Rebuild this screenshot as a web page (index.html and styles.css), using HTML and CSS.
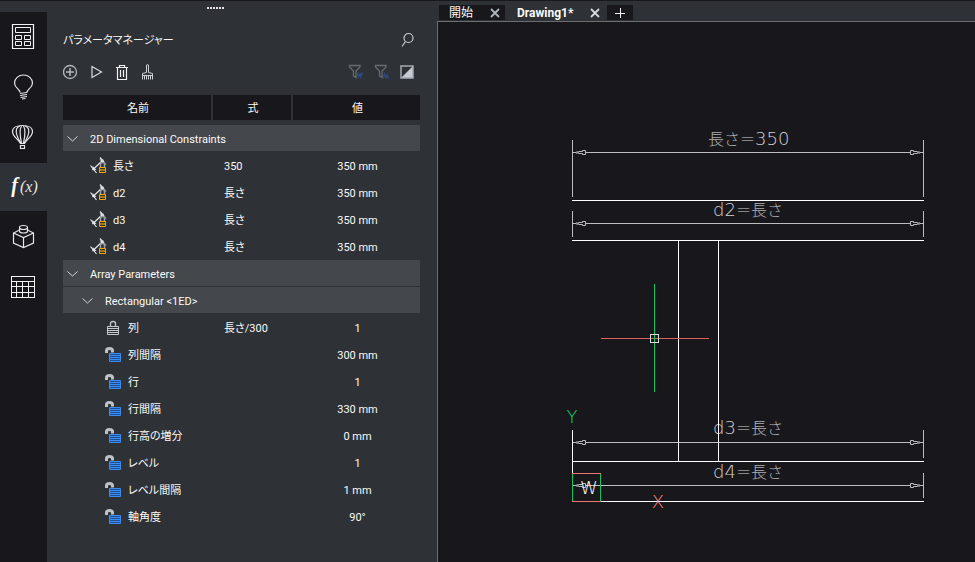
FILE: index.html
```html
<!DOCTYPE html>
<html lang="ja">
<head>
<meta charset="utf-8">
<meta name="viewport" content="width=device-width, initial-scale=1">
<title>Drawing1</title>
<link rel="stylesheet" href="styles.css">
</head>
<body>
<svg class="defs" aria-hidden="true">
  <symbol id="chevron" viewBox="0 0 11 17">
    <path d="M0.5 6.5L5.5 11L10.5 6.5" fill="none" stroke="#d4d6d9"/>
  </symbol>
  <symbol id="dim-lock" viewBox="0 0 17 17">
    <path d="M2.500 13L13 3M10 0.500L16 7.500M0.500 8.500L6.500 16" fill="none" stroke="#e4e6e8" stroke-width="1.200"/>
    <path d="M9.500 2.500H13.500V6.500ZM2.500 9V13H6.500Z" fill="#e4e6e8"/>
    <path d="M8.500 16.500V9.500H10V6L11.500 5H14L15.500 6V9.500H16.500V16.500Z" fill="#2e3135"/>
    <path d="M10.500 10V7.500Q10.500 5.500 12.500 5.500T14.500 7.500V10" fill="none" stroke="#9da3a9" stroke-width="1.500"/>
    <path d="M9.500 10.500H15.500V15.500H9.500Z" fill="#3a3020" stroke="#ffa60d"/>
    <path d="M10 13H15" stroke="#ffc21a"/>
  </symbol>
  <symbol id="lock" viewBox="0 0 17 17">
    <path d="M5.500 7V4.500Q5.500 2.500 8 2.500T10.500 4.500V7" fill="none" stroke="#c4c9ce" stroke-width="1.300"/>
    <path d="M2.500 7.500H13.500V15.500H2.500ZM3 9.500H13M3 11.500H13M3 13.500H13" fill="none" stroke="#c4c9ce"/>
  </symbol>
  <symbol id="unlock" viewBox="0 0 17 17">
    <path d="M1.500 7V4.500Q1.500 2.500 4.500 2.500T7.500 4.500V6.500" fill="none" stroke="#bcc2c8" stroke-width="3"/>
    <path d="M4.500 7.500H15.500V15.500H4.500Z" fill="#1f4f93" stroke="#3b8df2"/>
    <path d="M5 9.500H15M5 11.500H15M5 13.500H15" stroke="#3b8df2"/>
  </symbol>
  <symbol id="close" viewBox="0 0 10 10">
    <path d="M1 1L9 9M9 1L1 9" fill="none" stroke="currentColor" stroke-width="1.800"/>
  </symbol>
  <symbol id="arrow" viewBox="0 0 13 5" overflow="visible">
    <path d="M0 2.500H3M3 2H6V1.500H9.500V0.500H12.500V4.500H9.500V3.500H6V3H3" fill="none" stroke="#bdbdc0"/>
  </symbol>
</svg>

<div class="app">
  <div class="dock">
    <div class="grip" aria-hidden="true"><i></i><i></i><i></i><i></i><i></i><i></i></div>
    <div class="dock-body">
      <nav class="rail" aria-label="パネル">
        <button class="rail-item" type="button" aria-label="プロパティ">
          <svg width="25" height="26" fill="none" stroke="#f2f2f3"><path d="M1.500 0.500H22.500V24.500H1.500Z" stroke-width="1.200"/><path d="M4.500 3.500H19.500V8.500H4.500ZM4.500 11.500H10.500V15.500H4.500ZM13.500 11.500H19.500V15.500H13.500ZM4.500 17.500H10.500V21.500H4.500ZM13.500 17.500H19.500V21.500H13.500Z"/></svg>
        </button>
        <button class="rail-item" type="button" aria-label="ヒント">
          <svg width="25" height="26" fill="none" stroke="#e6e6e8" stroke-width="1.200"><path d="M9 18.500C9 15 3.500 14 3.500 9A9 8 0 0 1 21.500 9C21.500 14 16 15 16 18.500"/><path d="M9 19.500L16 18.500M9 21.500L16 20.500M9.500 23.500L16 22.500M11 25L14.500 24.500"/></svg>
        </button>
        <button class="rail-item" type="button" aria-label="レンダリング">
          <svg width="25" height="26" fill="none" stroke="#e6e6e8" stroke-width="1.200"><path d="M9.500 19.500C7 15 1.500 12.500 1.500 7.500C1.500 3.500 6 1.500 11.500 1.500S21.500 3.500 21.500 7.500C21.500 12.500 16 15 13.500 19.500Z"/><path d="M9.500 19C6 12 4.500 9 5.500 5Q6.500 2.500 9 2M13.500 19C17 12 18.500 9 17.500 5Q16.500 2.500 14 2M10.500 19C8.500 10 8.500 5 10.500 2M12.500 19C14.500 10 14.500 5 12.500 2"/><path d="M9.500 21.500H13.500V24.500H9.500Z"/></svg>
        </button>
        <button class="rail-item rail-item-active" type="button" aria-label="パラメータ"><span class="fx"><b>f</b>(x)</span></button>
        <button class="rail-item" type="button" aria-label="コンポーネント">
          <svg width="25" height="26" fill="none" stroke="#e6e6e8" stroke-width="1.200"><path d="M8.500 6L2.500 9V19L12.500 23.500L22.500 19V9L16.500 6M2.500 9L12.500 13.500L22.500 9M12.500 13.500V23.500"/><path d="M8.500 4V7Q8.500 9 12.500 9T16.500 7V4"/><ellipse cx="12.500" cy="3.500" rx="4" ry="2"/></svg>
        </button>
        <button class="rail-item" type="button" aria-label="表">
          <svg width="25" height="26" fill="none" stroke="#f2f2f3" shape-rendering="crispEdges"><path d="M0.500 2.500H23.500V23.500H0.500ZM0.500 7.500H23.500M0.500 12.500H23.500M0.500 18.500H23.500M5.500 7.500V23.500M11.500 7.500V23.500M17.500 7.500V23.500"/></svg>
        </button>
      </nav>

      <section class="panel" aria-labelledby="panel-title">
        <header class="panel-head">
          <h1 class="panel-title" id="panel-title">パラメータマネージャー</h1>
          <button class="tool" type="button" aria-label="検索">
            <svg width="16" height="16" fill="none" stroke="#c9ccd0" stroke-width="1.200"><circle cx="9.500" cy="6" r="4.500"/><path d="M6.500 9.500L3 14.500"/></svg>
          </button>
        </header>
        <div class="toolbar">
          <div class="tools">
            <button class="tool" type="button" aria-label="追加">
              <svg width="16" height="16" fill="none" stroke="#b4b9be" stroke-width="1.300"><circle cx="7" cy="8" r="6.500"/><path d="M7 4V12M3 8H11" stroke-width="1.500"/></svg>
            </button>
            <button class="tool" type="button" aria-label="アニメーション">
              <svg width="16" height="16" fill="none" stroke="#d9dbde" stroke-width="1.200"><path d="M3 2.500L12.500 8L3 13.500Z"/></svg>
            </button>
            <button class="tool" type="button" aria-label="削除">
              <svg width="16" height="16" fill="none" stroke="#f0f1f2" stroke-width="1.200"><path d="M1 3.500H13M4.500 3V1.500H9.500V3M2.500 4V15.500H11.500V4M5.500 6V13M8.500 6V13"/></svg>
            </button>
            <button class="tool" type="button" aria-label="クリーンアップ">
              <svg width="16" height="16" fill="none" stroke="#cdd0d4"><path d="M5.500 8.500V2Q5.500 0.500 6.500 0.500T7.500 2V8.500L11.500 9.500V15.500M5.500 8.500L1.500 9.500V15.500M1.500 11.500H11.500M3.500 12V15.500M5.500 12V15.500M7.500 12V15.500M9.500 12V15.500"/></svg>
            </button>
          </div>
          <div class="tools tools-end">
            <button class="tool" type="button" aria-label="フィルターを展開">
              <svg width="16" height="16" fill="none" stroke="#686c71" stroke-width="1.300"><path d="M2.500 1.500H13V3L9 7V13.500L6.500 12V7L2.500 3Z"/><path d="M10 8.500L11.500 13L13 9.500L14 13L15.500 8.500" stroke="#2d4a7c" stroke-width="1.500"/></svg>
            </button>
            <button class="tool" type="button" aria-label="フィルターを折りたたむ">
              <svg width="16" height="16" fill="none" stroke="#686c71" stroke-width="1.300"><path d="M2.500 1.500H13V3L9 7V13.500L6.500 12V7L2.500 3Z"/><path d="M10 14.500L11.500 10L13 13.500L14 11L15.500 14.500" stroke="#2d4a7c" stroke-width="1.500"/></svg>
            </button>
            <button class="tool" type="button" aria-label="反転">
              <svg width="16" height="16"><path d="M14 2V14H2Z" fill="#c6ccd3"/><path d="M2 2H14V14H2Z" fill="none" stroke="#a5aab0" stroke-width="1.500"/></svg>
            </button>
          </div>
        </div>

        <table class="params">
          <colgroup><col class="col-name"><col class="col-formula"><col></colgroup>
          <thead>
            <tr><th scope="col">名前</th><th scope="col">式</th><th scope="col">値</th></tr>
          </thead>
          <tbody>
            <tr class="group"><th colspan="3" scope="rowgroup"><button class="group-toggle" type="button" aria-expanded="true"><svg class="chevron"><use href="#chevron"/></svg>2D Dimensional Constraints</button></th></tr>
            <tr><td><span class="name"><svg class="icon"><use href="#dim-lock"/></svg>長さ</span></td><td>350</td><td>350 mm</td></tr>
            <tr><td><span class="name"><svg class="icon"><use href="#dim-lock"/></svg>d2</span></td><td>長さ</td><td>350 mm</td></tr>
            <tr><td><span class="name"><svg class="icon"><use href="#dim-lock"/></svg>d3</span></td><td>長さ</td><td>350 mm</td></tr>
            <tr><td><span class="name"><svg class="icon"><use href="#dim-lock"/></svg>d4</span></td><td>長さ</td><td>350 mm</td></tr>
          </tbody>
          <tbody class="nested">
            <tr class="group"><th colspan="3" scope="rowgroup"><button class="group-toggle" type="button" aria-expanded="true"><svg class="chevron"><use href="#chevron"/></svg>Array Parameters</button></th></tr>
            <tr class="group subgroup"><th colspan="3" scope="rowgroup"><button class="group-toggle" type="button" aria-expanded="true"><svg class="chevron"><use href="#chevron"/></svg>Rectangular &lt;1ED&gt;</button></th></tr>
            <tr><td><span class="name"><svg class="icon"><use href="#lock"/></svg>列</span></td><td>長さ/300</td><td>1</td></tr>
            <tr><td><span class="name"><svg class="icon"><use href="#unlock"/></svg>列間隔</span></td><td></td><td>300 mm</td></tr>
            <tr><td><span class="name"><svg class="icon"><use href="#unlock"/></svg>行</span></td><td></td><td>1</td></tr>
            <tr><td><span class="name"><svg class="icon"><use href="#unlock"/></svg>行間隔</span></td><td></td><td>330 mm</td></tr>
            <tr><td><span class="name"><svg class="icon"><use href="#unlock"/></svg>行高の増分</span></td><td></td><td>0 mm</td></tr>
            <tr><td><span class="name"><svg class="icon"><use href="#unlock"/></svg>レベル</span></td><td></td><td>1</td></tr>
            <tr><td><span class="name"><svg class="icon"><use href="#unlock"/></svg>レベル間隔</span></td><td></td><td>1 mm</td></tr>
            <tr><td><span class="name"><svg class="icon"><use href="#unlock"/></svg>軸角度</span></td><td></td><td>90°</td></tr>
          </tbody>
        </table>
      </section>
    </div>
  </div>

  <main class="document">
    <div class="tabs">
      <div class="tab"><a class="tab-label" href="#start">開始</a><button class="tab-close" type="button" aria-label="開始を閉じる"><svg width="10" height="10"><use href="#close"/></svg></button></div>
      <div class="tab tab-active"><a class="tab-label" href="#drawing">Drawing1*</a><button class="tab-close" type="button" aria-label="Drawing1を閉じる"><svg width="10" height="10"><use href="#close"/></svg></button></div>
      <button class="tab-new" type="button" aria-label="新しい図面"><svg width="10" height="10" stroke="#f2f2f3" shape-rendering="crispEdges"><path d="M0 5.500H10M5.500 0V10"/></svg></button>
    </div>
    <svg class="drawing" id="drawing" role="img" aria-label="I形断面の図面">
      <!-- Dimensions: extension lines, dimension lines and arrowheads -->
      <g fill="none" stroke="#bdbdc0" shape-rendering="crispEdges">
        <path d="M134.500 118V175M485.500 118V175M147 130.500H473"/>
        <path d="M134.500 189V215M485.500 189V215M147 201.500H473"/>
        <path d="M485.500 408V436M147 420.500H473"/>
        <path d="M485.500 451V476M147 463.500H473"/>
      </g>
      <g>
        <use href="#arrow" x="135" y="128" width="13" height="5"/>
        <use href="#arrow" x="135" y="199" width="13" height="5"/>
        <use href="#arrow" x="135" y="418" width="13" height="5"/>
        <use href="#arrow" x="135" y="461" width="13" height="5"/>
      </g>
      <g transform="translate(620 0) scale(-1 1)">
        <use href="#arrow" x="135" y="128" width="13" height="5"/>
        <use href="#arrow" x="135" y="199" width="13" height="5"/>
        <use href="#arrow" x="135" y="418" width="13" height="5"/>
        <use href="#arrow" x="135" y="461" width="13" height="5"/>
      </g>
      <g class="dim-text">
        <text x="270" y="123"><tspan class="kanji">長さ</tspan>=350</text>
        <text x="275" y="194">d2=<tspan class="kanji">長さ</tspan></text>
        <text x="275" y="412">d3=<tspan class="kanji">長さ</tspan></text>
        <text x="275" y="456">d4=<tspan class="kanji">長さ</tspan></text>
      </g>
      <!-- Section outline -->
      <path d="M134 178.500H486M134 218.500H486M134 439.500H486M163 479.500H486M240.500 218V440M280.500 218V440M134.500 408V451" fill="none" stroke="#fff" shape-rendering="crispEdges"/>
      <!-- UCS icon -->
      <g fill="none" shape-rendering="crispEdges">
        <path d="M134 451.500H163M134 479.500H163" stroke="#f07674"/>
        <path d="M134.500 452V479M162.500 452V479" stroke="#0cc564"/>
      </g>
      <text class="ucs ucs-y" x="134" y="401">Y</text>
      <text class="ucs ucs-x" x="220" y="486">X</text>
      <text class="ucs ucs-w" x="151" y="472">W</text>
      <!-- Crosshair -->
      <g fill="none" shape-rendering="crispEdges">
        <path d="M163 316.500H271" stroke="#d9605f"/>
        <path d="M216.500 262V370" stroke="#0cc564"/>
        <path d="M212.500 312.500H220.500V320.500H212.500Z" stroke="#dcdcdf"/>
      </g>
    </svg>
  </main>
</div>
</body>
</html>
```
FILE: styles.css
```css
:root {
  --panel: #2e3135;
  --dark: #18171c;
  --group: #44474b;
  --edge: #6c6d70;
  --text: #fafafa;
}

* {
  box-sizing: border-box;
}

body {
  margin: 0;
  background: var(--panel);
  color: var(--text);
  font-family: Roboto, "Noto Sans CJK JP", sans-serif;
  font-size: 11px;
  line-height: 16px;
  font-feature-settings: "palt";
}

button {
  margin: 0;
  padding: 0;
  border: 0;
  background: none;
  color: inherit;
  font: inherit;
}

svg {
  display: block;
  flex: none;
}

.defs {
  position: absolute;
  width: 0;
  height: 0;
}

.app {
  display: grid;
  grid-template-columns: 437px minmax(0, 1fr);
  min-height: 100vh;
  border-top: 1px solid var(--dark);
}

.dock {
  display: flex;
  flex-direction: column;
}

.grip {
  display: flex;
  justify-content: center;
  gap: 1px;
  height: 11px;
  padding: 6px 6px 0 0;
}

.grip i {
  width: 2px;
  height: 2px;
  background: #e4e4e6;
}

.dock-body {
  display: flex;
  flex: 1;
}

.rail {
  display: flex;
  flex-direction: column;
  width: 47px;
  background: var(--dark);
}

.rail-item {
  display: flex;
  align-items: center;
  justify-content: center;
  height: 50px;
}

.rail-item-active {
  height: 48px;
  margin: 1px 0;
  padding: 0 0 2px 2px;
  background: var(--panel);
}

.fx {
  color: #e4e6e9;
  font-family: "Liberation Serif", serif;
  font-size: 16px;
  font-style: italic;
}

.fx b {
  margin-right: 2px;
  color: var(--text);
  font-size: 20px;
}

.panel {
  flex: 1;
  padding: 16px 17px 0 16px;
}

.panel-head,
.toolbar {
  display: flex;
  align-items: center;
  justify-content: space-between;
  height: 24px;
  padding-right: 5px;
}

.panel-head {
  margin-bottom: 8px;
}

.panel-title {
  margin: 0;
  padding-top: 2px;
  font-size: 11px;
  font-weight: 400;
}

.toolbar {
  margin-bottom: 11px;
}

.tools {
  display: flex;
  gap: 10px;
}

.params {
  width: 100%;
  border-spacing: 0;
  table-layout: fixed;
}

.col-name {
  width: 150px;
}

.col-formula {
  width: 80px;
}

.params th,
.params td {
  height: 27px;
  padding: 2px 0 0;
  font-weight: 400;
  text-align: left;
}

.params thead th {
  height: 30px;
  padding-left: 2px;
  border-right: 2px solid var(--panel);
  border-bottom: 5px solid var(--panel);
  background: var(--dark);
  text-align: center;
}

.params thead th:last-child {
  border-right: 0;
}

.params td:nth-child(2) {
  padding-left: 11px;
}

.params td:nth-child(3) {
  padding-left: 2px;
  text-align: center;
}

.params .group th {
  padding-top: 4px;
  border-bottom: 1px solid var(--panel);
  background: var(--group);
}

.group-toggle {
  display: flex;
  align-items: center;
  gap: 12px;
  padding-left: 4px;
}

.subgroup .group-toggle {
  padding-left: 19px;
}

.chevron {
  width: 11px;
  height: 17px;
  margin-bottom: 3px;
}

.name {
  display: flex;
  align-items: center;
  gap: 6px;
  padding-left: 27px;
}

.nested .name {
  padding-left: 42px;
}

.icon {
  width: 17px;
  height: 17px;
  margin-bottom: 2px;
}

.document {
  display: flex;
  flex-direction: column;
}

.tabs {
  display: flex;
  gap: 2px;
  height: 20px;
  padding: 4px 0 0 2px;
}

.tab,
.tab-new {
  display: flex;
  align-items: center;
  height: 15px;
  background: var(--dark);
}

.tab {
  gap: 17px;
  padding: 0 5px 0 10px;
  color: #aeb4bc;
  font-size: 12px;
}

.tab-label {
  color: var(--text);
  text-decoration: none;
}

.tab-active {
  background: var(--panel);
  color: #d5d8dc;
  font-weight: 700;
}

.tab-new {
  justify-content: center;
  width: 26px;
}

.drawing {
  flex: 1;
  width: 100%;
  border-top: 1px solid var(--edge);
  border-left: 1px solid var(--edge);
  background: var(--dark);
  font-feature-settings: normal;
}

.dim-text {
  fill: #d2d2d5;
  font-family: "DejaVu Sans Light", "DejaVu Sans", sans-serif;
  font-size: 18px;
  font-weight: 200;
}

.kanji {
  fill: #acaeb2;
  font-family: "Noto Sans CJK JP", sans-serif;
  font-size: 16px;
  font-weight: 300;
}

.ucs {
  font-family: "DejaVu Sans Light", "DejaVu Sans", sans-serif;
  font-size: 18px;
  font-weight: 200;
  text-anchor: middle;
}

.ucs-x {
  fill: #ff8482;
}

.ucs-y {
  fill: #0fdc70;
}

.ucs-w {
  fill: #fff;
}
```
